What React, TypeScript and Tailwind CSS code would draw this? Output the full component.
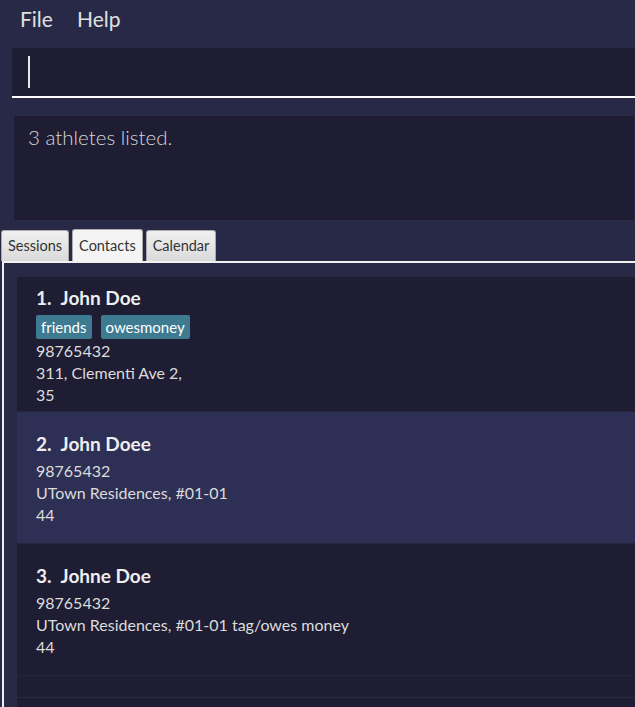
const people = [
  {
    name: "John Doe",
    tags: ["friends", "owesmoney"],
    phone: "98765432",
    address: "311, Clementi Ave 2,",
    extra: "35",
  },
  {
    name: "John Doee",
    tags: [],
    phone: "98765432",
    address: "UTown Residences, #01-01",
    extra: "44",
  },
  {
    name: "Johne Doe",
    tags: [],
    phone: "98765432",
    address: "UTown Residences, #01-01 tag/owes money",
    extra: "44",
  },
];

export default function App() {
  return (
    <div className="w-[635px] h-[707px] overflow-hidden bg-[#272946] font-['Lato','Noto_Sans',sans-serif] text-[#dcdcdc]">
      {/* Menu bar */}
      <div className="h-[38px] flex items-center gap-[24px] px-[20px] text-[21px] text-[#e0e0e0]">
        <span>File</span>
        <span>Help</span>
      </div>

      {/* Command box */}
      <div className="ml-[12px] mt-[10px] h-[50px] bg-[#1d1d33] border-b-2 border-white flex items-center pl-[16px]">
        <div className="w-[2px] h-[32px] bg-[#e8e8e8]" />
      </div>

      {/* Result display */}
      <div className="ml-[13px] mt-[17px] h-[106px] bg-[#1e1d33] border border-[#2a2b47] pl-[14px] pt-[6px] text-[20.5px] text-[#d6d6d6] font-light">
        3 athletes listed.
      </div>

      {/* Tabs */}
      <div className="mt-[8px] flex items-end gap-[3px] pl-[1px] h-[32px] text-[14.5px] text-[#333]">
        <div className="h-[31px] px-[6px] flex items-center bg-gradient-to-b from-[#f0f0f0] to-[#dadada] border border-[#aaa] border-b-0 rounded-t-[3px]">
          Sessions
        </div>
        <div className="h-[32px] px-[6px] flex items-center bg-[#f4f4f4] border border-[#aaa] border-b-0 rounded-t-[3px]">
          Contacts
        </div>
        <div className="h-[31px] px-[6px] flex items-center bg-gradient-to-b from-[#f0f0f0] to-[#dadada] border border-[#aaa] border-b-0 rounded-t-[3px]">
          Calendar
        </div>
      </div>

      {/* Tab content */}
      <div className="ml-[2px] border-l-2 border-t-2 border-[#f0f0f0] h-[460px] pl-[13px] pt-[14px]">
        <div className="flex flex-col">
          {people.map((p, i) => (
            <div
              key={i}
              className={`min-h-[132px] flex flex-col pl-[19px] border-b border-[#24243c] ${
                i % 2 === 1 ? "bg-[#2e2f54]" : "bg-[#1e1d33]"
              } ${p.tags.length ? "pt-[9px] pb-[5px]" : "pt-[20px]"}`}
            >
              <div className="text-[19px] font-bold text-[#eeeeee] leading-[24px]">
                {i + 1}.<span className="ml-[9px]">{p.name}</span>
              </div>
              {p.tags.length > 0 && (
                <div className="flex gap-[9px] mt-[5px] mb-[1px]">
                  {p.tags.map((t) => (
                    <span
                      key={t}
                      className="bg-[#3e7b91] text-white text-[15px] leading-[24px] px-[5px] rounded-[2px]"
                    >
                      {t}
                    </span>
                  ))}
                </div>
              )}
              <div className={`text-[16px] leading-[22px] ${p.tags.length ? "mt-0" : "mt-[4px]"}`}>
                {p.phone}
              </div>
              <div className="text-[16px] leading-[22px]">{p.address}</div>
              <div className="text-[16px] leading-[22px]">{p.extra}</div>
            </div>
          ))}
          <div className="h-[22px] bg-[#1e1d33] border-b border-[#2a2a44]" />
          <div className="h-[40px] bg-[#1e1d33]" />
        </div>
      </div>
    </div>
  );
}
